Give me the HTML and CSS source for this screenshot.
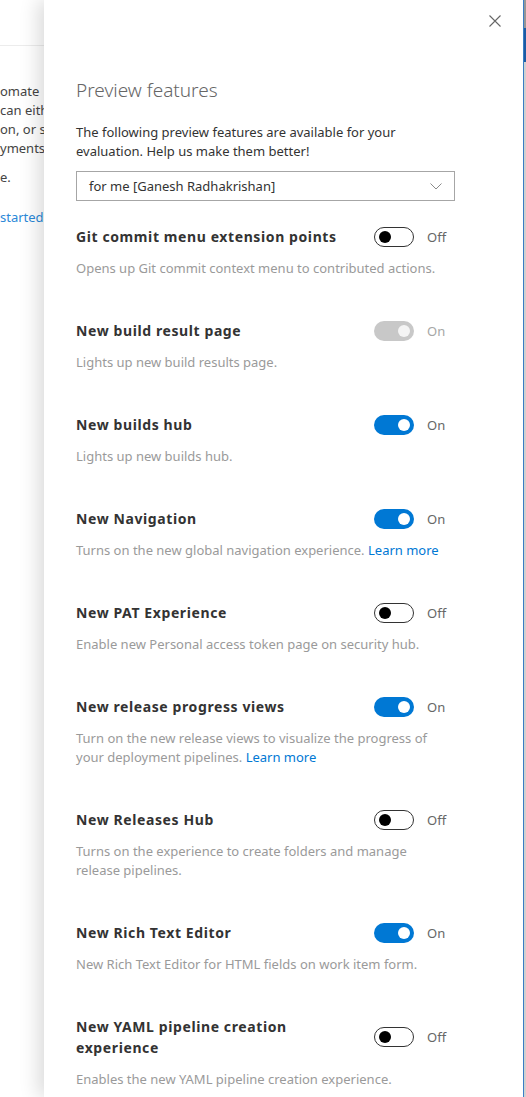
FILE: index.html
```html
<!DOCTYPE html>
<html lang="en">
<head>
<meta charset="utf-8">
<title>Preview features</title>
<link rel="stylesheet" href="styles.css">
</head>
<body>
<div class="page">
  <div class="backdrop">
    <div class="bg-header"></div>
    <div class="bg-content">
      <p class="bg-para">omate<br>can either<br>on, or se<br>yments</p>
      <p class="bg-para">e.</p>
      <p class="bg-link">started</p>
    </div>
  </div>
  <div class="edge-strip">
    <div class="edge-top"></div>
    <div class="edge-blue"></div>
  </div>

  <aside class="panel">
    <div class="panel-header">
      <button class="close" aria-label="Close">
        <svg width="12" height="12" viewBox="0 0 12 12"><path d="M0.5 0.5L11.5 11.5M11.5 0.5L0.5 11.5" stroke="#666" stroke-width="1.1" fill="none"/></svg>
      </button>
    </div>
    <div class="panel-body">
      <h1 class="panel-title">Preview features</h1>
      <p class="intro">The following preview features are available for your evaluation. Help us make them better!</p>
      <div class="dropdown">
        <span>for me [Ganesh Radhakrishan]</span>
        <svg width="12" height="7" viewBox="0 0 12 7"><path d="M0.5 0.5L6 6L11.5 0.5" stroke="#8a8a8a" stroke-width="1" fill="none"/></svg>
      </div>

      <div class="feature-list">
        <div class="feature">
          <div class="feature-row">
            <div class="feature-title">Git commit menu extension points</div>
            <div class="toggle-group"><span class="toggle off"></span><span class="toggle-label">Off</span></div>
          </div>
          <p class="feature-desc">Opens up Git commit context menu to contributed actions.</p>
        </div>

        <div class="feature">
          <div class="feature-row">
            <div class="feature-title">New build result page</div>
            <div class="toggle-group"><span class="toggle disabled"></span><span class="toggle-label muted">On</span></div>
          </div>
          <p class="feature-desc">Lights up new build results page.</p>
        </div>

        <div class="feature">
          <div class="feature-row">
            <div class="feature-title">New builds hub</div>
            <div class="toggle-group"><span class="toggle on"></span><span class="toggle-label">On</span></div>
          </div>
          <p class="feature-desc">Lights up new builds hub.</p>
        </div>

        <div class="feature">
          <div class="feature-row">
            <div class="feature-title">New Navigation</div>
            <div class="toggle-group"><span class="toggle on"></span><span class="toggle-label">On</span></div>
          </div>
          <p class="feature-desc">Turns on the new global navigation experience. <a href="#">Learn more</a></p>
        </div>

        <div class="feature">
          <div class="feature-row">
            <div class="feature-title">New PAT Experience</div>
            <div class="toggle-group"><span class="toggle off"></span><span class="toggle-label">Off</span></div>
          </div>
          <p class="feature-desc">Enable new Personal access token page on security hub.</p>
        </div>

        <div class="feature">
          <div class="feature-row">
            <div class="feature-title">New release progress views</div>
            <div class="toggle-group"><span class="toggle on"></span><span class="toggle-label">On</span></div>
          </div>
          <p class="feature-desc">Turn on the new release views to visualize the progress of your deployment pipelines. <a href="#">Learn more</a></p>
        </div>

        <div class="feature">
          <div class="feature-row">
            <div class="feature-title">New Releases Hub</div>
            <div class="toggle-group"><span class="toggle off"></span><span class="toggle-label">Off</span></div>
          </div>
          <p class="feature-desc">Turns on the experience to create folders and manage release pipelines.</p>
        </div>

        <div class="feature">
          <div class="feature-row">
            <div class="feature-title">New Rich Text Editor</div>
            <div class="toggle-group"><span class="toggle on"></span><span class="toggle-label">On</span></div>
          </div>
          <p class="feature-desc">New Rich Text Editor for HTML fields on work item form.</p>
        </div>

        <div class="feature">
          <div class="feature-row">
            <div class="feature-title">New YAML pipeline creation experience</div>
            <div class="toggle-group"><span class="toggle off"></span><span class="toggle-label">Off</span></div>
          </div>
          <p class="feature-desc">Enables the new YAML pipeline creation experience.</p>
        </div>
      </div>
    </div>
  </aside>
</div>
</body>
</html>
```

FILE: styles.css
```css
* { box-sizing: border-box; }
html, body {
  margin: 0;
  padding: 0;
  width: 526px;
  height: 1097px;
  overflow: hidden;
  background: #fff;
  font-family: "Segoe UI", "Noto Sans", sans-serif;
  color: #333;
}
.page {
  position: relative;
  display: flex;
  width: 526px;
  height: 1097px;
  overflow: hidden;
}
.backdrop {
  flex: 1;
  background: #fff;
}
.bg-header {
  height: 46px;
  border-bottom: 1px solid #ececec;
}
.bg-content {
  padding-top: 36px;
  font-size: 13px;
  line-height: 19px;
  white-space: nowrap;
}
.bg-para {
  margin: 0 0 10px 0;
  color: #444;
}
.bg-link {
  margin: 21px 0 0 0;
  color: #2b88d8;
}
.edge-strip {
  width: 3px;
  border-left: 1px solid #3c82cc;
  background: #d6d6d6;
  display: flex;
  flex-direction: column;
}
.edge-top { height: 28px; background: #9a9a9a; }
.edge-blue { height: 34px; background: #1d5ea8; }

.panel {
  position: absolute;
  top: 0;
  left: 44px;
  right: 3px;
  bottom: 0;
  background: #fff;
  box-shadow: -6px 0 18px rgba(0, 0, 0, 0.14);
}
.panel-header {
  height: 41px;
  display: flex;
  justify-content: flex-end;
  align-items: center;
  padding-right: 22px;
}
.close {
  border: 0;
  background: transparent;
  padding: 0;
  width: 12px;
  height: 12px;
  display: flex;
}
.panel-body {
  width: 443px;
  padding: 0 32px;
}
.panel-title {
  margin: 35px 0 0 0;
  font-size: 19px;
  line-height: 28px;
  font-weight: 300;
  color: #666;
}
.intro {
  margin: 19px 0 0 0;
  font-size: 13px;
  line-height: 19px;
  color: #333;
}
.dropdown {
  margin-top: 10px;
  height: 30px;
  border: 1px solid #a6a6a6;
  display: flex;
  align-items: center;
  justify-content: space-between;
  padding: 0 12px 0 12px;
  font-size: 13px;
  color: #333;
}
.feature-list {
  margin-top: 25px;
  display: flex;
  flex-direction: column;
  gap: 42px;
}
.feature-row {
  display: flex;
  align-items: center;
  gap: 12px;
}
.feature-title {
  flex: 1;
  font-size: 14px;
  line-height: 21px;
  font-weight: 700;
  letter-spacing: 0.6px;
  color: #333;
}
.toggle-group {
  width: 81px;
  display: flex;
  align-items: center;
  gap: 13px;
}
.toggle {
  position: relative;
  width: 40px;
  height: 20px;
  border-radius: 10px;
  flex: none;
}
.toggle::after {
  content: "";
  position: absolute;
  top: 4px;
  width: 12px;
  height: 12px;
  border-radius: 50%;
}
.toggle.off {
  border: 1px solid #333;
  background: #fff;
}
.toggle.off::after {
  top: 3px;
  left: 4px;
  background: #000;
}
.toggle.on { background: #0078d4; }
.toggle.on::after { right: 4px; background: #fff; }
.toggle.disabled { background: #c8c8c8; }
.toggle.disabled::after { right: 4px; background: #f4f4f4; }
.toggle-label {
  font-size: 13px;
  color: #666;
}
.toggle-label.muted { color: #a6a6a6; }
.feature-desc {
  margin: 12px 0 0 0;
  padding-right: 6px;
  font-size: 13px;
  line-height: 19px;
  color: #9a9a9a;
}
.feature-desc a {
  color: #0078d4;
  text-decoration: none;
}
```
